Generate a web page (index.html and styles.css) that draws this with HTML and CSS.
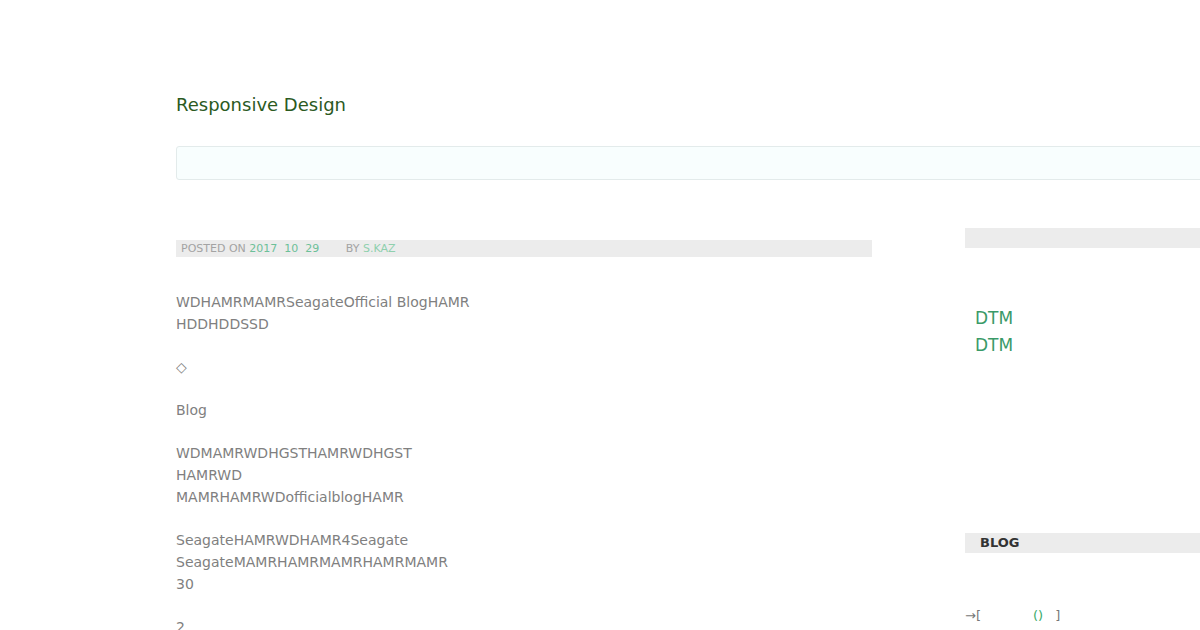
FILE: index.html
```html
<!DOCTYPE html>
<html>
<head>
<meta charset="utf-8">
<link rel="stylesheet" href="styles.css">
</head>
<body>
<div class="page">
  <header class="site-header">
    <h1 class="site-title">Responsive Design</h1>
    <div class="nav-box"></div>
  </header>
  <div class="layout">
    <main class="main">
      <div class="entry-meta">
        <span>POSTED ON</span>
        <a class="date"><span>2017</span><span>10</span><span>29</span></a>
        <span class="by">BY</span>
        <a class="author">S.KAZ</a>
      </div>
      <div class="entry-content">
        <p>WDHAMRMAMRSeagateOfficial BlogHAMR<br>HDDHDDSSD</p>
        <p>◇</p>
        <p>Blog</p>
        <p>WDMAMRWDHGSTHAMRWDHGST<br>HAMRWD<br>MAMRHAMRWDofficialblogHAMR</p>
        <p>SeagateHAMRWDHAMR4Seagate<br>SeagateMAMRHAMRMAMRHAMRMAMR<br>30</p>
        <p>2</p>
      </div>
    </main>
    <aside class="sidebar">
      <div class="widget-bar"></div>
      <ul class="dtm-list">
        <li><a>DTM</a></li>
        <li><a>DTM</a></li>
      </ul>
      <h3 class="widget-title">BLOG</h3>
      <div class="widget-link">→[<span class="gap"></span><a>()</a><span class="gap2"></span>]</div>
    </aside>
  </div>
</div>
</body>
</html>
```
FILE: styles.css
```css
html, body {
  margin: 0;
  padding: 0;
  background: #fff;
  overflow: hidden;
}
body {
  font-family: "DejaVu Sans", sans-serif;
  color: #808080;
  width: 1200px;
  height: 630px;
}
.page {
  padding-left: 176px;
  width: 1200px;
  height: 630px;
  box-sizing: border-box;
  overflow: hidden;
}
.site-header {
  padding-top: 93px;
}
.site-title {
  margin: 0;
  font-size: 18px;
  font-weight: normal;
  line-height: 24px;
  color: #2b5a1f;
}
.nav-box {
  margin-top: 29px;
  height: 32px;
  width: 1100px;
  background: #f8fefe;
  border: 1px solid #e3ebeb;
  border-radius: 3px;
}
.layout {
  display: flex;
  margin-top: 48px;
}
.main {
  width: 696px;
  flex: none;
  padding-top: 12px;
}
.entry-meta {
  background: #ececec;
  height: 17px;
  line-height: 17px;
  font-size: 11px;
  color: #a3a3a3;
  padding-left: 5px;
}
.entry-meta a { color: #6cc099; }
.date span { margin-right: 4px; }
.date span + span { margin-left: 3px; }
.by { margin-left: 19px; }
.author { color: #8fd0ae !important; }
.entry-content {
  padding-top: 34px;
  font-size: 14px;
  line-height: 22px;
  color: #808080;
}
.entry-content p {
  margin: 0 0 21px;
}
.sidebar {
  margin-left: 93px;
  flex: 1;
  min-width: 300px;
}
.widget-bar {
  height: 20px;
  background: #ececec;
}
.dtm-list {
  list-style: none;
  margin: 57px 0 0;
  padding: 0 0 0 10px;
  font-size: 17px;
  line-height: 27px;
}
.dtm-list a { color: #3a9a68; }
.widget-title {
  margin: 174px 0 0;
  height: 20px;
  line-height: 20px;
  background: #ececec;
  font-size: 13px;
  font-weight: bold;
  color: #333;
  padding-left: 15px;
}
.widget-link {
  margin-top: 53px;
  font-size: 13px;
  line-height: 20px;
  color: #777;
}
.widget-link a { color: #3aaa6a; }
.gap { display: inline-block; width: 52px; }
.gap2 { display: inline-block; width: 12px; }
```
